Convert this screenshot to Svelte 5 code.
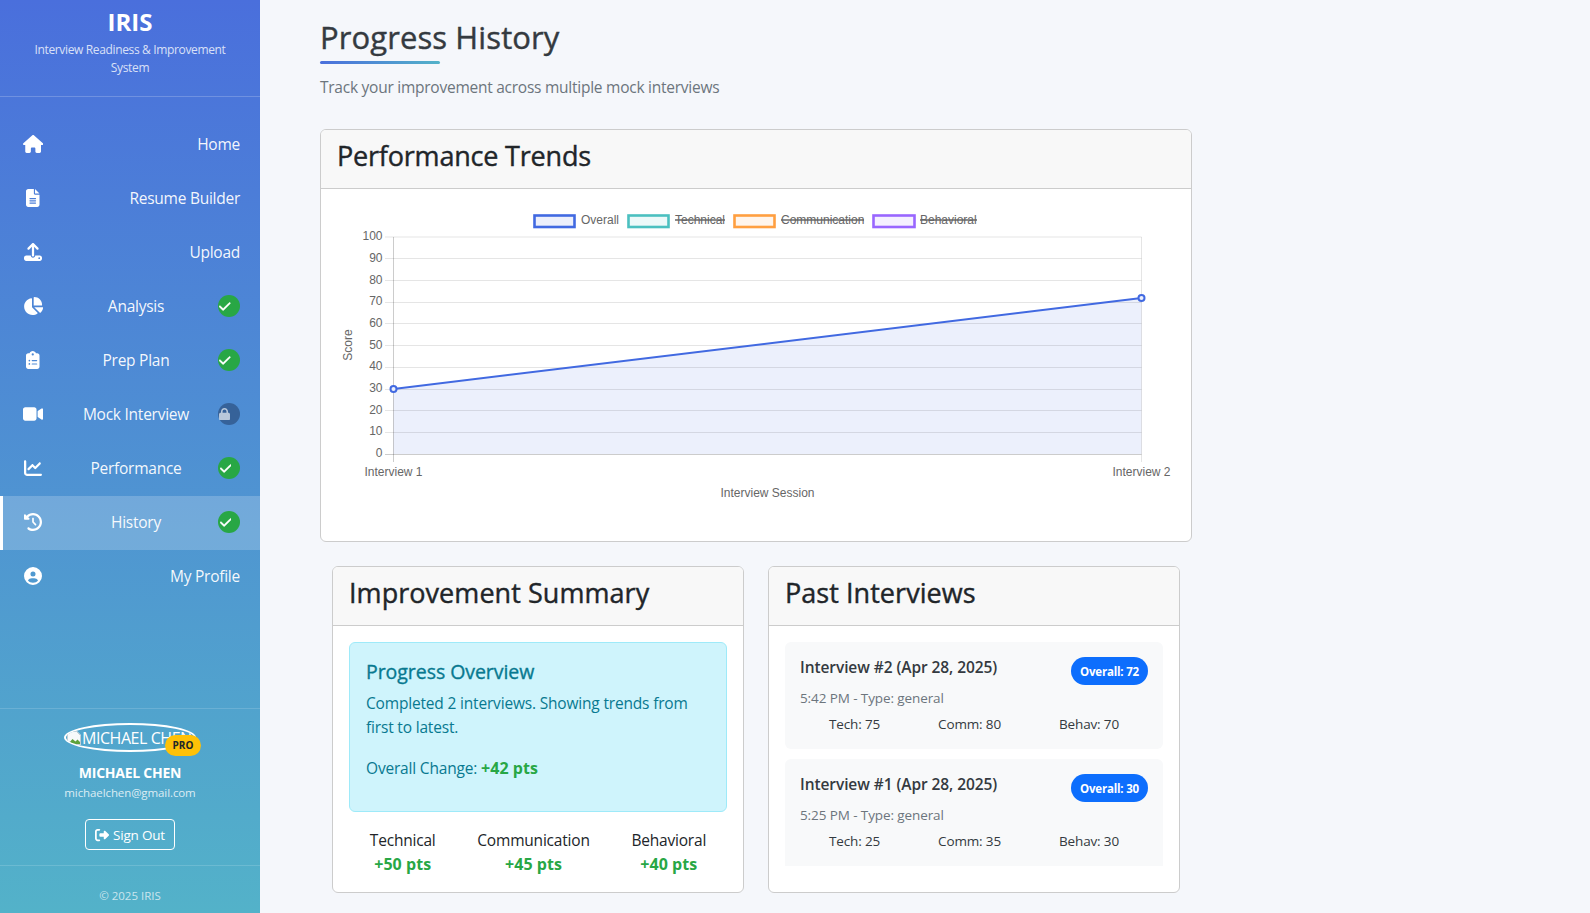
<script>
  const P = {
    home: ['0 0 576 512', 'M575.8 255.5c0 18-15 32.1-32 32.1h-32l.7 160.2c0 2.7-.2 5.4-.5 8.1V472c0 22.1-17.9 40-40 40H456c-1.1 0-2.2 0-3.3-.1c-1.4 .1-2.8 .1-4.2 .1H416 392c-22.1 0-40-17.9-40-40V448 384c0-17.7-14.3-32-32-32H256c-17.7 0-32 14.3-32 32v64 24c0 22.1-17.9 40-40 40H160 128.1c-1.5 0-3-.1-4.5-.2c-1.2 .1-2.4 .2-3.6 .2H104c-22.1 0-40-17.9-40-40V360c0-.9 0-1.9 .1-2.8V287.6H32c-18 0-32-14-32-32.1c0-9 3-17 10-24L266.4 8c7-7 15-8 22-8s15 2 21 7L564.8 231.5c8 7 12 15 11 24z'],
    file: ['0 0 384 512', 'M64 0C28.7 0 0 28.7 0 64V448c0 35.3 28.7 64 64 64H320c35.3 0 64-28.7 64-64V160H256c-17.7 0-32-14.3-32-32V0H64zM256 0V128H384L256 0zM112 256H272c8.8 0 16 7.2 16 16s-7.2 16-16 16H112c-8.8 0-16-7.2-16-16s7.2-16 16-16zm0 64H272c8.8 0 16 7.2 16 16s-7.2 16-16 16H112c-8.8 0-16-7.2-16-16s7.2-16 16-16zm0 64H272c8.8 0 16 7.2 16 16s-7.2 16-16 16H112c-8.8 0-16-7.2-16-16s7.2-16 16-16z'],
    upload: ['0 0 512 512', 'M288 109.3V352c0 17.7-14.3 32-32 32s-32-14.3-32-32V109.3l-73.4 73.4c-12.5 12.5-32.8 12.5-45.3 0s-12.5-32.8 0-45.3l128-128c12.5-12.5 32.8-12.5 45.3 0l128 128c12.5 12.5 12.5 32.8 0 45.3s-32.8 12.5-45.3 0L288 109.3zM64 352H192c0 35.3 28.7 64 64 64s64-28.7 64-64H448c35.3 0 64 28.7 64 64v32c0 35.3-28.7 64-64 64H64c-35.3 0-64-28.7-64-64V416c0-35.3 28.7-64 64-64zM432 456a24 24 0 1 0 0-48 24 24 0 1 0 0 48z'],
    pie: ['0 0 576 512', 'M304 240V16.6c0-9 7-16.6 16-16.6C443.7 0 544 100.3 544 224c0 9-7.6 16-16.6 16H304zM32 272C32 150.7 122.1 50.3 239 34.3c9.2-1.3 17 6.1 17 15.4V288L412.5 444.5c6.7 6.7 6.2 17.7-1.5 23.1C371.8 495.6 323.8 512 272 512C139.5 512 32 404.6 32 272zm526.4 16c9.3 0 16.6 7.8 15.4 17c-7.7 55.9-34.6 105.6-73.9 142.3c-6 5.6-15.4 5.2-21.2-.7L320 288H558.4z'],
    clip: ['0 0 384 512', 'M192 0c-41.8 0-77.4 26.7-90.5 64H64C28.7 64 0 92.7 0 128V448c0 35.3 28.7 64 64 64H320c35.3 0 64-28.7 64-64V128c0-35.3-28.7-64-64-64H282.5C269.4 26.7 233.8 0 192 0zm0 64a32 32 0 1 1 0 64 32 32 0 1 1 0-64zM72 272a24 24 0 1 1 48 0 24 24 0 1 1 -48 0zm104-16H304c8.8 0 16 7.2 16 16s-7.2 16-16 16H176c-8.8 0-16-7.2-16-16s7.2-16 16-16zM72 368a24 24 0 1 1 48 0 24 24 0 1 1 -48 0zm88 0c0-8.8 7.2-16 16-16H304c8.8 0 16 7.2 16 16s-7.2 16-16 16H176c-8.8 0-16-7.2-16-16z'],
    video: ['0 0 576 512', 'M0 128C0 92.7 28.7 64 64 64H320c35.3 0 64 28.7 64 64V384c0 35.3-28.7 64-64 64H64c-35.3 0-64-28.7-64-64V128zM559.1 99.8c10.4 5.6 16.9 16.4 16.9 28.2V384c0 11.8-6.5 22.6-16.9 28.2s-23 5-32.9-1.6l-96-64L416 337.1V320 192 174.9l14.2-9.5 96-64c9.8-6.5 22.4-7.2 32.9-1.6z'],
    line: ['0 0 512 512', 'M64 64c0-17.7-14.3-32-32-32S0 46.3 0 64V400c0 44.2 35.8 80 80 80H480c17.7 0 32-14.3 32-32s-14.3-32-32-32H80c-8.8 0-16-7.2-16-16V64zm406.6 86.6c12.5-12.5 12.5-32.8 0-45.3s-32.8-12.5-45.3 0L320 210.7l-57.4-57.4c-12.5-12.5-32.8-12.5-45.3 0l-112 112c-12.5 12.5-12.5 32.8 0 45.3s32.8 12.5 45.3 0L240 221.3l57.4 57.4c12.5 12.5 32.8 12.5 45.3 0l128-128z'],
    history: ['0 0 512 512', 'M75 75L41 41C25.9 25.9 0 36.6 0 57.9V168c0 13.3 10.7 24 24 24H134.1c21.4 0 32.1-25.9 17-41l-30.8-30.8C155 85.5 203 64 256 64c106 0 192 86 192 192s-86 192-192 192c-40.8 0-78.6-12.7-109.7-34.4c-14.5-10.1-34.4-6.6-44.6 7.9s-6.6 34.4 7.9 44.6C151.2 495 201.7 512 256 512c141.4 0 256-114.6 256-256S397.4 0 256 0C185.3 0 121.3 28.7 75 75zm181 53c-13.3 0-24 10.7-24 24V256c0 6.4 2.5 12.5 7 17l72 72c9.4 9.4 24.6 9.4 33.9 0s9.4-24.6 0-33.9l-65-65V152c0-13.3-10.7-24-24-24z'],
    user: ['0 0 512 512', 'M399 384.2C376.9 345.8 335.4 320 288 320H224c-47.4 0-88.9 25.8-111 64.2c35.2 39.2 86.2 63.8 143 63.8s107.8-24.7 143-63.8zM0 256a256 256 0 1 1 512 0A256 256 0 1 1 0 256zm256 16a72 72 0 1 0 0-144 72 72 0 1 0 0 144z']
  };
  const CHECK = 'M438.6 105.4c12.5 12.5 12.5 32.8 0 45.3l-256 256c-12.5 12.5-32.8 12.5-45.3 0l-128-128c-12.5-12.5-12.5-32.8 0-45.3s32.8-12.5 45.3 0L160 338.7 393.4 105.4c12.5-12.5 32.8-12.5 45.3 0z';
  const LOCK = 'M144 144v48H304V144c0-44.2-35.8-80-80-80s-80 35.8-80 80zM80 192V144C80 64.5 144.5 0 224 0s144 64.5 144 144v48h16c35.3 0 64 28.7 64 64V448c0 35.3-28.7 64-64 64H64c-35.3 0-64-28.7-64-64V256c0-35.3 28.7-64 64-64H80z';
  const SIGNOUT = 'M377.9 105.9L500.7 228.7c7.2 7.2 11.3 17.1 11.3 27.3s-4.1 20.1-11.3 27.3L377.9 406.1c-6.4 6.4-15 9.9-24 9.9c-18.7 0-33.9-15.2-33.9-33.9l0-62.1-128 0c-17.7 0-32-14.3-32-32l0-64c0-17.7 14.3-32 32-32l128 0 0-62.1c0-18.7 15.2-33.9 33.9-33.9c9 0 17.6 3.6 24 9.9zM160 96L96 96c-17.7 0-32 14.3-32 32l0 256c0 17.7 14.3 32 32 32l64 0c17.7 0 32 14.3 32 32s-14.3 32-32 32l-64 0c-53 0-96-43-96-96L0 128C0 75 43 32 96 32l64 0c17.7 0 32 14.3 32 32s-14.3 32-32 32z';

  const nav = [
    { icon: 'home', label: 'Home' },
    { icon: 'file', label: 'Resume Builder' },
    { icon: 'upload', label: 'Upload' },
    { icon: 'pie', label: 'Analysis', badge: 'done' },
    { icon: 'clip', label: 'Prep Plan', badge: 'done' },
    { icon: 'video', label: 'Mock Interview', badge: 'lock' },
    { icon: 'line', label: 'Performance', badge: 'done' },
    { icon: 'history', label: 'History', badge: 'done', active: true },
    { icon: 'user', label: 'My Profile' }
  ];
  const interviews = [
    { title: 'Interview #2 (Apr 28, 2025)', score: 72, time: '5:42 PM - Type: general', t: 75, c: 80, b: 70 },
    { title: 'Interview #1 (Apr 28, 2025)', score: 30, time: '5:25 PM - Type: general', t: 25, c: 35, b: 30 }
  ];
  const stats = [['Technical', '+50 pts'], ['Communication', '+45 pts'], ['Behavioral', '+40 pts']];
  const ticks = [[100, 237, 239.5], [90, 258.5, 261.5], [80, 280.5, 283.5], [70, 302.5, 305], [60, 323.5, 326.5], [50, 345.5, 348.5], [40, 367.5, 370], [30, 389.5, 392], [20, 410.5, 413.5], [10, 432.5, 435], [0, 454.5, 457]];
  const legend = [
    { x: 534.5, w: 40, tx: 581, label: 'Overall', c: '#4169e1', f: '#eceffb', end: 0 },
    { x: 628.5, w: 40, tx: 675, label: 'Technical', c: '#4bc0c0', f: '#edf9f9', end: 725 },
    { x: 734.5, w: 40, tx: 781, label: 'Communication', c: '#ff9f40', f: '#fff5ec', end: 864 },
    { x: 873.5, w: 41, tx: 920, label: 'Behavioral', c: '#9966ff', f: '#f5f0ff', end: 977 }
  ];
</script>

<div class="layout">
  <aside class="sidebar">
    <header class="brand">
      <h1>IRIS</h1>
      <p>Interview Readiness &amp; Improvement System</p>
    </header>
    <nav class="nav">
      {#each nav as n}
        <div class="nav-item" class:active={n.active}>
          <span class="nav-icon">
            <svg viewBox={P[n.icon][0]} height="18" fill="#fff"><path d={P[n.icon][1]} /></svg>
          </span>
          <span class="nav-label">{n.label}</span>
          {#if n.badge === 'done'}
            <span class="status done"><svg viewBox="0 0 448 512" width="11.5" height="13" fill="#fff" stroke="#fff" stroke-width="14"><path d={CHECK} /></svg></span>
          {:else if n.badge === 'lock'}
            <span class="status locked"><svg viewBox="0 0 448 512" width="11" height="12.5" fill="#fff" fill-opacity=".65"><path d={LOCK} /></svg></span>
          {/if}
        </div>
      {/each}
    </nav>
    <section class="account">
      <div class="avatar-wrap">
        <div class="avatar">
          <svg class="broken" viewBox="0 0 16 16" width="16" height="16">
            <path d="M1 1h10l4 4v10H1z" fill="#dfe6ea" />
            <path d="M1.5 1.5h9l4 4v9h-13z" fill="#f7f9fa" stroke="#b8c4cb" stroke-width=".8" />
            <path d="M2 14l4.5-5 3 2.5 2-2 2.5 2.5v2z" fill="#5da23c" />
          </svg>
          <span>MICHAEL CHEN</span>
        </div>
        <span class="pro">PRO</span>
      </div>
      <div class="uname">MICHAEL CHEN</div>
      <div class="email">michaelchen@gmail.com</div>
      <button class="signout"><svg viewBox="0 0 512 512" width="14" height="14" fill="#fff"><path d={SIGNOUT} /></svg>Sign Out</button>
    </section>
    <footer class="copy">© 2025 IRIS</footer>
  </aside>

  <main class="main">
    <div class="page-head">
      <h2>Progress History</h2>
      <p>Track your improvement across multiple mock interviews</p>
    </div>

    <section class="card">
      <h3 class="card-head">Performance Trends</h3>
      <div class="chart-body">
        <svg class="chart" viewBox="321 189 870 352" width="870" height="352">
          {#each legend as l}
            <rect x={l.x} y="215.5" width={l.w} height="11.5" fill={l.f} stroke={l.c} stroke-width="2.6" />
            <text x={l.tx} y="224" class="tick">{l.label}</text>
            {#if l.end}<line x1={l.tx} x2={l.end} y1="220" y2="220" stroke="#666" stroke-width="1.5" />{/if}
          {/each}
          <path d="M393.5 389 L1141.5 298 V454 H393.5 Z" fill="#4169e1" fill-opacity=".1" />
          {#each ticks as t}
            <line x1="385" x2="1141.5" y1={t[1]} y2={t[1]} stroke="#000" stroke-opacity={t[0] === 0 ? 0.2 : 0.1} />
            <text x="382.5" y={t[2]} text-anchor="end" class="tick">{t[0]}</text>
          {/each}
          <line x1="393.5" x2="393.5" y1="237" y2="462" stroke="#000" stroke-opacity=".2" />
          <line x1="1141.5" x2="1141.5" y1="237" y2="462" stroke="#000" stroke-opacity=".1" />
          <line x1="393.5" y1="389" x2="1141.5" y2="298" stroke="#4169e1" stroke-width="2" />
          <circle cx="393.5" cy="389" r="3" fill="#eceffb" stroke="#4169e1" stroke-width="2" />
          <circle cx="1141.5" cy="298" r="3" fill="#eceffb" stroke="#4169e1" stroke-width="2" />
          <text x="393.5" y="476" text-anchor="middle" class="tick">Interview 1</text>
          <text x="1141.5" y="476" text-anchor="middle" class="tick">Interview 2</text>
          <text x="767.5" y="497" text-anchor="middle" class="tick">Interview Session</text>
          <text transform="translate(352 345) rotate(-90)" text-anchor="middle" class="tick">Score</text>
        </svg>
      </div>
    </section>

    <div class="row">
      <div class="col">
        <section class="card tall">
          <h3 class="card-head">Improvement Summary</h3>
          <div class="body">
            <div class="alert">
              <h4>Progress Overview</h4>
              <p>Completed 2 interviews. Showing trends from first to latest.</p>
              <p class="change">Overall Change: <b>+42 pts</b></p>
            </div>
            <div class="stats">
              {#each stats as s}
                <div class="stat"><div>{s[0]}</div><b>{s[1]}</b></div>
              {/each}
            </div>
          </div>
        </section>
      </div>
      <div class="col">
        <section class="card tall">
          <h3 class="card-head">Past Interviews</h3>
          <div class="body">
            {#each interviews as iv}
              <article class="iv">
                <div class="iv-top">
                  <h5>{iv.title}</h5>
                  <span class="pill">Overall: {iv.score}</span>
                </div>
                <div class="iv-time">{iv.time}</div>
                <div class="iv-scores">
                  <span>Tech: {iv.t}</span><span>Comm: {iv.c}</span><span>Behav: {iv.b}</span>
                </div>
              </article>
            {/each}
          </div>
        </section>
      </div>
    </div>
  </main>
</div>

<style>
  :global(body) { margin: 0; background: #f5f7fb; font-family: "Open Sans", "Noto Sans", sans-serif; color: #212529; }
  .layout { display: flex; height: 913px; overflow: hidden; }
  .sidebar { width: 260px; flex: none; height: 913px; display: flex; flex-direction: column; color: #fff; background: linear-gradient(180deg, #4a6fdc 0%, #53b2c9 100%); }
  .brand { height: 97px; box-sizing: border-box; border-bottom: 1px solid rgba(255,255,255,.2); text-align: center; padding: 5px 20px 0; }
  .brand h1 { margin: 0 0 3px; font-size: 24px; line-height: 33px; font-weight: 700; }
  .brand p { margin: 0; font-size: 12px; line-height: 18px; letter-spacing: -.35px; color: rgba(255,255,255,.8); }
  .nav { flex: 1; padding-top: 21px; }
  .nav-item { height: 54px; box-sizing: border-box; padding: 0 20px 2px; display: flex; align-items: center; justify-content: space-between; }
  .nav-item.active { background: rgba(255,255,255,.2); border-left: 3px solid #fff; padding-left: 17px; }
  .nav-icon { width: 26px; margin-right: 8px; display: flex; justify-content: center; flex: none; }
  .nav-icon svg { display: block; }
  .nav-label { font-size: 15.5px; line-height: 24px; letter-spacing: -.25px; color: rgba(255,255,255,.95); }
  .status { width: 22px; height: 22px; border-radius: 50%; display: flex; align-items: center; box-sizing: border-box; flex: none; }
  .status.done { background: #28a745; padding-left: 1.5px; }
  .status.locked { background: #366299; padding-left: 1px; }
  .account { border-top: 1px solid rgba(255,255,255,.15); height: 157px; box-sizing: border-box; display: flex; flex-direction: column; align-items: center; padding-top: 14px; }
  .avatar-wrap { position: relative; width: 132px; height: 30px; margin-bottom: 9px; }
  .avatar { width: 132px; height: 29px; box-sizing: border-box; border: 2px solid #fff; border-radius: 50%; overflow: hidden; display: flex; align-items: center; white-space: nowrap; font-size: 16px; letter-spacing: -.45px; padding-left: 0; }
  .broken { flex: none; }
  .pro { position: absolute; left: 101px; top: 12px; width: 36px; height: 21px; border-radius: 11px; background: #ffc107; color: #212529; font-size: 10px; font-weight: 700; line-height: 21px; text-align: center; }
  .uname { font-size: 14px; font-weight: 700; line-height: 22px; letter-spacing: -.25px; }
  .email { font-size: 11.5px; line-height: 18px; letter-spacing: -.1px; color: rgba(255,255,255,.8); margin-bottom: 17px; }
  .signout { width: 90px; height: 31px; background: transparent; border: 1px solid #fff; border-radius: 4px; color: #fff; font: inherit; font-size: 13.5px; letter-spacing: -.2px; padding: 0; display: flex; align-items: center; justify-content: center; gap: 4px; }
  .copy { border-top: 1px solid rgba(255,255,255,.15); height: 48px; box-sizing: border-box; padding-top: 21px; text-align: center; font-size: 11.5px; line-height: 18px; color: rgba(255,255,255,.7); }

  .main { flex: 1; padding: 0 60px; min-width: 0; }
  .page-head { width: 872px; height: 129px; box-sizing: border-box; padding-top: 18px; }
  .page-head h2 { margin: 0; font-size: 31px; line-height: 38px; font-weight: 400; -webkit-text-stroke: .4px currentColor; color: #343a40; letter-spacing: .1px; position: relative; padding-bottom: 8px; }
  .page-head h2::after { content: ""; position: absolute; left: 0; bottom: 0; width: 120px; height: 3px; border-radius: 2px; background: linear-gradient(90deg, #4a6fdc, #53b2c9); }
  .page-head p { margin: 11px 0 0; font-size: 15.5px; line-height: 24px; color: #6c757d; letter-spacing: -.25px; }

  .card { background: #fff; border: 1px solid #ccc; border-radius: 6px; overflow: hidden; width: 872px; box-sizing: border-box; }
  .card-head { margin: 0; height: 59px; box-sizing: border-box; background: #f8f8f8; border-bottom: 1px solid #ccc; padding: 0 16px; font-size: 27px; line-height: 51px; font-weight: 400; -webkit-text-stroke: .4px currentColor; letter-spacing: -.2px; color: #212529; }
  .tall .card-head { letter-spacing: .05px; }
  .chart-body { height: 352px; }
  .chart { display: block; }
  .tick { font-family: "Liberation Sans", Arial, sans-serif; font-size: 12px; fill: #666; }

  .row { display: flex; width: 872px; margin-top: 24px; }
  .col { width: 436px; padding: 0 12px; box-sizing: border-box; }
  .card.tall { width: 100%; height: 327px; }
  .body { padding: 16px; }
  .alert { height: 170px; box-sizing: border-box; background: #cff4fc; border: 1px solid #9eeaf9; border-radius: 6px; padding: 15px 16px; color: #087990; }
  .alert h4 { margin: 0 0 6px; font-size: 19.5px; line-height: 27px; font-weight: 400; -webkit-text-stroke: .35px currentColor; letter-spacing: -.05px; }
  .alert p { margin: 0; font-size: 15.5px; line-height: 24px; letter-spacing: -.18px; }
  .alert .change { margin-top: 17px; }
  .alert b, .stat b { color: #28a745; font-weight: 700; font-size: 16px; letter-spacing: .05px; }
  .stats { display: flex; justify-content: space-around; margin-top: 16px; font-size: 15.5px; line-height: 24px; letter-spacing: -.2px; text-align: center; }
  .iv { background: #f8f9fa; border-radius: 6px; padding: 15px; height: 107px; box-sizing: border-box; margin-bottom: 10px; }
  .iv:last-child { margin-bottom: 0; border-radius: 6px 6px 0 0; }
  .iv-top { display: flex; justify-content: space-between; align-items: flex-start; }
  .iv-top h5 { margin: 0; font-size: 15.5px; line-height: 20px; font-weight: 600; letter-spacing: -.08px; color: #343a40; }
  .pill { width: 77px; height: 28px; border-radius: 14px; background: #0d6efd; color: #fff; font-size: 11.5px; font-weight: 700; line-height: 29px; text-align: center; letter-spacing: -.2px; }
  .iv-time { margin-top: 3px; font-size: 13.5px; line-height: 20px; color: #6c757d; letter-spacing: -.1px; }
  .iv-scores { display: flex; justify-content: space-around; margin-top: 6px; font-size: 13.5px; line-height: 20px; letter-spacing: -.15px; color: #343a40; }
</style>
